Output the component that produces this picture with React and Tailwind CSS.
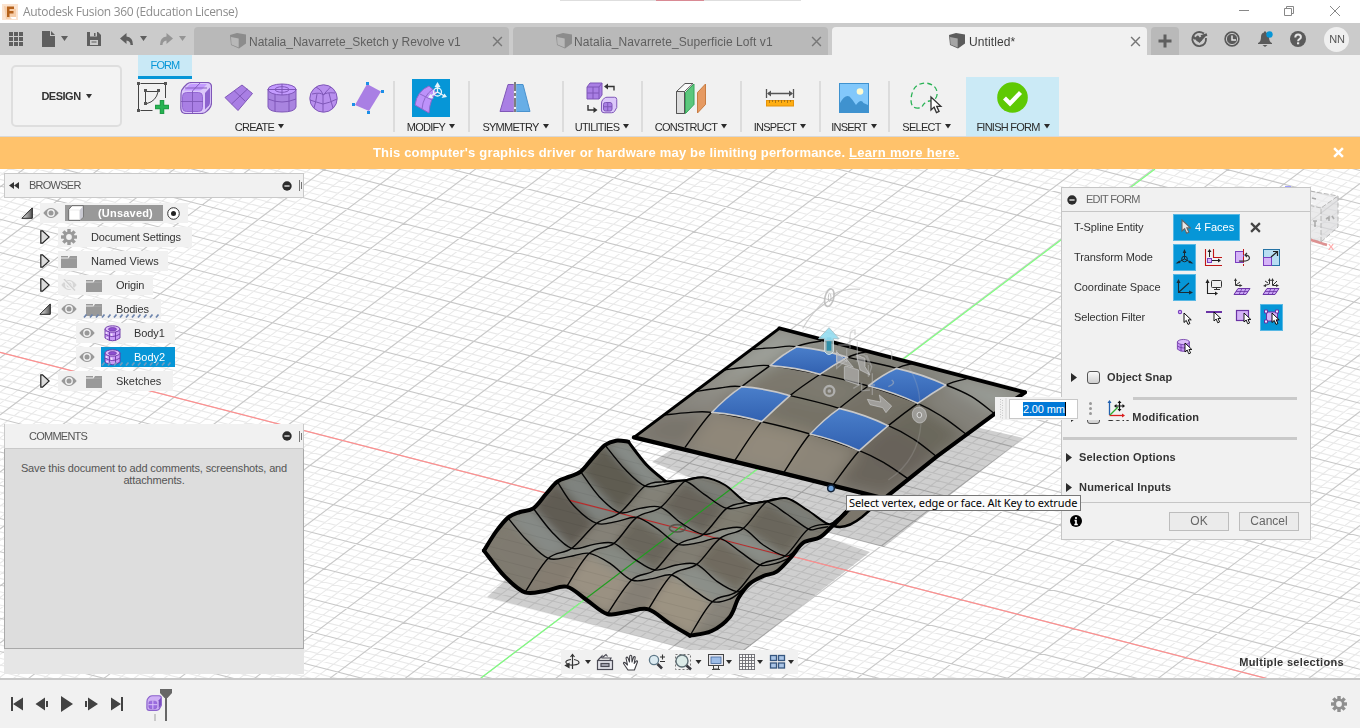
import React from "react";

const PURPLE = "#a97fe4";
const PLINE = "#7f57b8";

/* ---------- helpers ---------- */
function smooth(pts) {
  let d = `M${pts[0][0]} ${pts[0][1]}`;
  for (let i = 0; i < pts.length - 1; i++) {
    const p0 = pts[i - 1] || pts[i];
    const p1 = pts[i];
    const p2 = pts[i + 1];
    const p3 = pts[i + 2] || p2;
    const k = 6;
    d += `C${p1[0] + (p2[0] - p0[0]) / k} ${p1[1] + (p2[1] - p0[1]) / k} ${p2[0] - (p3[0] - p1[0]) / k} ${p2[1] - (p3[1] - p1[1]) / k} ${p2[0]} ${p2[1]}`;
  }
  return d;
}
const poly = (pts) => pts.map((p) => p.join(",")).join(" ");

function Caret({ className = "" }) {
  return (
    <svg className={`shrink-0 ${className}`} width="6" height="5" viewBox="0 0 6 5">
      <path d="M0 0h6L3 4.400z" fill="currentColor" />
    </svg>
  );
}

/* ---------- model geometry ---------- */
const W = [
  [[42, 362], [165, 487], [290, 470], [412, 552], [535, 538], [660, 617], [780, 560]],
  [[115, 265], [235, 385], [358, 370], [485, 450], [605, 435], [727, 515], [818, 480]],
  [[190, 235], [305, 355], [432, 340], [555, 420], [680, 403], [800, 485], [840, 462]],
  [[262, 155], [380, 280], [500, 262], [625, 343], [750, 325], [870, 405], [958, 384]],
  [[332, 125], [450, 248], [572, 232], [700, 313], [820, 295], [945, 378], [1000, 338]],
  [[405, 45], [525, 168], [645, 153], [770, 235], [890, 215], [1015, 297], [1075, 290]],
  [[475, 35], [580, 155], [700, 142], [830, 217], [950, 205], [1075, 282], [1130, 250]],
];
const W_MID = [
  [[100, 432], [228, 476], [350, 515], [474, 543], [598, 584], [730, 603]],
  [[170, 330], [298, 380], [420, 400], [548, 446], [665, 475], [780, 507]],
  [[245, 305], [372, 343], [495, 388], [620, 405], [742, 455], [822, 475]],
  [[312, 228], [442, 274], [560, 295], [690, 337], [810, 365], [918, 400]],
  [[388, 200], [510, 235], [635, 280], [762, 297], [880, 345], [975, 362]],
  [[465, 118], [585, 163], [703, 193], [832, 227], [950, 252], [1045, 295]],
  [[530, 108], [650, 150], [765, 165], [890, 214], [1012, 240], [1105, 265]],
];
const rowPts = (r) => W[r].flatMap((p, i) => (W_MID[r][i] ? [p, W_MID[r][i]] : [p]));
const W_LEFT = [[42, 362], [78, 305], [115, 262], [150, 246], [190, 235], [228, 192], [262, 155], [298, 140], [332, 125], [370, 82], [405, 45], [438, 32], [475, 35]];
const W_RIGHT = [[660, 617], [725, 603], [780, 560], [805, 505], [838, 462], [880, 438], [920, 425], [962, 383], [1000, 338], [1050, 322], [1090, 285], [1130, 245]];
const W_BACK = [[475, 35], [530, 105], [588, 155]];
const W_FRONT = [[42, 362], [105, 440], [165, 487], [228, 482], [290, 470], [350, 510], [412, 552], [474, 545], [535, 538], [598, 580], [660, 617]];
const CROSS = [1, 2, 3, 4, 5].map((c) => W.map((r) => r[c]));
const W_TONES = [
  ["#7f7a6f", "#857d71", "#9a9182", "#857f74", "#9c9382", "#88847a"],
  ["#868a86", "#7c7a72", "#868a83", "#807e75", "#8b8f89", "#898c88"],
  ["#605c52", "#858177", "#6a665b", "#817d72", "#6f6a5f", "#817e75"],
  ["#7f837f", "#7a7870", "#848881", "#807e75", "#898d87", "#85837c"],
  ["#5f5b51", "#838177", "#68645a", "#7f7b70", "#6b665b", "#7e7b72"],
  ["#868b87", "#8a8c86", "#7b7e78", "#898b85", "#7b7e78", "#6b675d"],
];

const P = [
  [[478, 145], [604, 183], [740, 215], [880, 250], [1040, 296], [1215, 337]],
  [[395, 208], [530, 200], [683, 232], [830, 265], [978, 315], [1122, 400]],
  [[310, 270], [450, 257], [600, 283], [745, 318], [893, 370], [1040, 464]],
  [[225, 335], [365, 320], [510, 347], [658, 385], [805, 437], [950, 530]],
  [[133, 405], [275, 397], [425, 425], [570, 462], [718, 512], [865, 597]],
  [[42, 472], [195, 502], [342, 545], [490, 580], [640, 614], [800, 650]],
];
const P_MID = [
  null,
  [[465, 203], null, null, null, [1055, 350]],
  [[385, 261], null, null, null, [970, 412]],
  [[300, 324], null, null, null, [882, 478]],
  [[205, 398], null, null, null, [795, 550]],
  null,
];
const pillowRow = (r) => P[r].flatMap((p, i) => (P_MID[r] && P_MID[r][i] ? [p, P_MID[r][i]] : [p]));
const P_TONES = [
  ["#9b9e98", "#969993", "#8a8b84", "#8b8d87", "#989b95"],
  ["#9fa29b", "#807e74", "#726f65", "#787469", "#84827a"],
  ["#97978f", "#7c786d", "#7d7a70", "#757166", "#6b675c"],
  ["#8b8982", "#7a756a", "#767266", "#736e63", "#67625a"],
  ["#78736a", "#8f8779", "#928a7c", "#8c8578", "#6a655b"],
];
const P_OUT = "M478 145L1215 337L1122 405Q1040 464 950 530L800 652L720 638L490 580L42 472Z";
const BLUE = [[1, 1], [1, 3], [3, 1], [3, 3]];

function Grid() {
  const minor = [];
  const major = [];
  for (let i = -125; i < 130; i++) {
    const y = 352.3 + i * 6.65;
    (i % 5 === 0 ? major : minor).push(`M0 ${y.toFixed(2)}L1360 ${(y + 1360 * 0.2575).toFixed(2)}`);
  }
  for (let i = -80; i < 85; i++) {
    const y = 527.3 + i * 11.4;
    (i % 5 === 0 ? major : minor).push(`M0 ${(y + 680 * 0.757).toFixed(2)}L1360 ${(y - 680 * 0.757).toFixed(2)}`);
  }
  return (
    <g fill="none">
      <path d={minor.join("")} stroke="#e9e9e9" strokeWidth="1.100" />
      <path d={major.join("")} stroke="#c8c8c8" strokeWidth="1.100" />
    </g>
  );
}

function Scene() {
  const wOutline =
    smooth(W_LEFT) +
    smooth(W_BACK).replace("M", "L") +
    smooth(rowPts(6).slice(2)).replace("M", "L") +
    smooth([...W_RIGHT].reverse()).replace("M", "L") +
    smooth([...W_FRONT].reverse()).replace("M", "L") + "Z";
  return (
    <svg className="absolute inset-0" width="1360" height="509" viewBox="0 169 1360 509">
      <defs>
        <filter id="soft" x="-10%" y="-10%" width="120%" height="120%"><feGaussianBlur stdDeviation="12" /></filter>
        <filter id="softer" x="-10%" y="-10%" width="120%" height="120%"><feGaussianBlur stdDeviation="24" /></filter>
        <clipPath id="wc"><path d={wOutline} /></clipPath>
        <clipPath id="pc"><path d={P_OUT} /></clipPath>
        <linearGradient id="faceBlue" x1="0" y1="0" x2="0" y2="1">
          <stop offset="0" stopColor="#4a7fcb" /><stop offset="1" stopColor="#3261b0" />
        </linearGradient>
      </defs>
      <rect x="0" y="169" width="1360" height="509" fill="#fff" />
      <path d="M652 462L690 438L980 428L1023 438L884 547L820 530Z M487 597L560 530L828 538L870 552L745 650L690 650Z" fill="#cfcfcf" />
      <g style={{ mixBlendMode: "multiply" }}><Grid /></g>
      <path d="M0 352.3L1360 702.5" stroke="#ff8f8f" strokeWidth="1.200" />
      <path d="M1155 169L481 678" stroke="#7dff7d" strokeWidth="1.200" />

      {/* pillow underside */}
      <path d="M845 512L885 497L862 517Q846 530 834 526Z" fill="#7b766b" stroke="#000" strokeWidth="2.400" />

      {/* wave body */}
      <g transform="translate(470 430) scale(0.33333)">
        <path d={wOutline} fill="#7c786d" />
        <g clipPath="url(#wc)">
          <g filter="url(#soft)">
            {W_TONES.map((row, r) =>
              row.map((c, k) => (
                <polygon key={`${r}-${k}`} points={poly([W[r][k], W[r][k + 1], W[r + 1][k + 1], W[r + 1][k]])} fill={c} stroke={c} strokeWidth="3" />
              ))
            )}
          </g>
          {[1, 3, 5].map((r) =>
            [1, 3].map((k) => (
              <polygon key={`c${r}-${k}`} points={poly([W[r][k], W_MID[r][k], W[r][k + 1], W[r + 1][k + 1], W_MID[r + 1][k], W[r + 1][k]])} fill="#9ca09a" fillOpacity=".5" />
            ))
          )}
          <g stroke="#000" strokeOpacity=".06" strokeWidth="3">
            {Array.from({ length: 30 }, (_, i) => (
              <path key={i} d={`M0 ${-260 + i * 33}L1200 ${49 + i * 33}`} />
            ))}
          </g>
          <path d="M300 211L965 383" stroke="#b92b2b" strokeWidth="3.500" />
          <path d="M855 122L345 508" stroke="#1f9e1f" strokeWidth="3.500" />
          <ellipse cx="622" cy="295" rx="24" ry="11" fill="none" stroke="#58554d" strokeWidth="5" />
        </g>
        <g fill="none" stroke="#050505" strokeWidth="4.200">
          {[1, 2, 3, 4, 5].map((r) => <path key={r} d={smooth(rowPts(r))} />)}
          {CROSS.map((c, i) => <path key={i} d={smooth(c)} />)}
        </g>
        <path d={smooth(rowPts(6).slice(2))} fill="none" stroke="#000" strokeWidth="6" />
        <path d={smooth(W_BACK)} fill="none" stroke="#000" strokeWidth="9" />
        <g fill="none" stroke="#000" strokeWidth="12" strokeLinecap="round">
          <path d={smooth(W_LEFT)} />
          <path d={smooth(W_FRONT)} />
          <path d={smooth(W_RIGHT)} />
        </g>
      </g>

      {/* pillow body */}
      <g transform="translate(620 280) scale(0.33333)">
        <path d={P_OUT} fill="#7d796e" />
        <g clipPath="url(#pc)">
          <g filter="url(#softer)">
            <path d={P_OUT} fill="#7d796e" stroke="#85827a" strokeWidth="60" />
            {P_TONES.map((row, r) =>
              row.map((c, k) => (
                <polygon key={`${r}-${k}`} points={poly([P[r][k], P[r][k + 1], P[r + 1][k + 1], P[r + 1][k]])} fill={c} stroke={c} strokeWidth="3" />
              ))
            )}
          </g>
        </g>
        <g fill="none" stroke="#050505" strokeWidth="4.200">
          {[1, 2, 3, 4].map((r) => <path key={"r" + r} d={smooth(pillowRow(r))} />)}
          {[1, 2, 3, 4].map((c) => <path key={"c" + c} d={smooth(P.map((r) => r[c]))} />)}
        </g>
        {BLUE.map(([r, c]) => (
          <path
            key={`${r}${c}`}
            d={`M${P[r][c].join(" ")}Q${(P[r][c][0] + P[r][c + 1][0]) / 2 + 2} ${(P[r][c][1] + P[r][c + 1][1]) / 2 - 8} ${P[r][c + 1].join(" ")}Q${(P[r][c + 1][0] + P[r + 1][c + 1][0]) / 2 + 1} ${(P[r][c + 1][1] + P[r + 1][c + 1][1]) / 2 - 3} ${P[r + 1][c + 1].join(" ")}Q${(P[r + 1][c][0] + P[r + 1][c + 1][0]) / 2 + 2} ${(P[r + 1][c][1] + P[r + 1][c + 1][1]) / 2 - 8} ${P[r + 1][c].join(" ")}Q${(P[r][c][0] + P[r + 1][c][0]) / 2 - 2} ${(P[r][c][1] + P[r + 1][c][1]) / 2 - 6} ${P[r][c].join(" ")}Z`}
            fill="url(#faceBlue)" stroke="#c8c8c8" strokeWidth="5" strokeLinejoin="round"
          />
        ))}
        <g fill="none" stroke="#000" strokeLinejoin="round" strokeLinecap="round">
          <path d="M478 145L42 472" strokeWidth="9" />
          <path d="M478 145L1215 337" strokeWidth="11" />
          <path d="M1215 337L1122 403Q1040 464 950 530L800 650" strokeWidth="12" />
          <path d="M42 472L490 580L720 637L790 655" strokeWidth="13" />
        </g>
        <circle cx="633" cy="625" r="10" fill="#6fa3dc" stroke="#132338" strokeWidth="4.500" />

        {/* manipulator */}
        <g fill="none" stroke="#b9b9b9" strokeOpacity=".85">
          <path d="M548 145Q575 100 612 65M642 42Q670 25 720 28" stroke="#c8c8c8" strokeWidth="3.500" />
          <ellipse cx="628" cy="53" rx="13" ry="27" transform="rotate(14 628 53)" strokeWidth="5" />
          <ellipse cx="629" cy="53" rx="4" ry="12" strokeWidth="3" />
          <circle cx="628" cy="333" r="15" strokeWidth="7" />
          <circle cx="628" cy="333" r="3" strokeWidth="5" />
          <path d="M868 262Q905 330 898 385M903 430Q895 540 805 600" strokeOpacity=".22" strokeWidth="4" />
          <path d="M650 210V265L680 240V205M690 205V170Q690 150 705 150V165M655 195H690M712 185V245M740 225L755 260L745 290V255M715 225Q740 215 745 250M745 315H765M757 280V345M780 215Q800 200 815 215V240M815 300Q830 310 805 320M700 325L725 310V332L750 330" strokeOpacity=".5" strokeWidth="4" />
        </g>
        <g fill="#bcbcbc" fillOpacity=".6" stroke="#cfcfcf" strokeOpacity=".6" strokeWidth="3">
          <path d="M673 262Q673 258 678 258L716 270V315L678 302Q673 300 673 295Z" />
          <path d="M650 215L680 245V238L700 262L650 245Z" />
          <path d="M710 225L735 235V260L750 285L720 270Z" />
          <path d="M742 358L782 366L778 345L815 378L798 398L788 383L750 374Z" />
          <ellipse cx="898" cy="405" rx="21" ry="24" transform="rotate(-20 898 405)" />
        </g>
        <ellipse cx="898" cy="405" rx="7" ry="8" fill="#8f8d88" stroke="#dadada" strokeWidth="3" />
        <path d="M614 176V215Q627 232 640 215V176Z" fill="#9fb9bd" fillOpacity=".8" stroke="#d5e4e7" strokeWidth="3" />
        <path d="M620 172V212H634V172Z" fill="#2f8fa8" />
        <path d="M627 143L657 176H640V182H614V176H596Z" fill="#92dcf0" fillOpacity=".9" stroke="#a9c5cc" strokeWidth="3" strokeLinejoin="round" />
      </g>

      {/* view cube */}
      <g opacity=".85">
        <path d="M1285 187h6" stroke="#8f8fff" strokeWidth="2" />
        <path d="M1306 200L1310 191L1338 196L1321 208Z" fill="#ececee" fillOpacity=".8" />
        <path d="M1306 202L1321 208V242L1306 238Z" fill="#e2e2e4" fillOpacity=".8" />
        <path d="M1321 208L1338 196V227L1321 242Z" fill="#d8d8db" fillOpacity=".8" />
        <path d="M1310 191L1338 196V227L1321 242L1308 238M1321 242V208L1338 196M1321 208L1308 205" fill="none" stroke="#ababab" strokeDasharray="5 2" />
        <path d="M1326 219l3-2v4M1332 216l2 3M1312 198l4 1M1313 221h4M1315 221v6" stroke="#9f9f9f" strokeWidth="1.600" fill="none" />
        <path d="M1308 239L1327 245" stroke="#d98080" strokeWidth="2.500" />
        <text x="1328" y="249.500" fontSize="9" fontWeight="bold" fill="#ff9c9c" fontFamily="Liberation Sans, sans-serif">X</text>
      </g>
    </svg>
  );
}

/* ---------- small icons ---------- */
const Eye = ({ off }) => (
  <svg className="shrink-0" width="16" height="12" viewBox="0 0 16 12">
    <g opacity={off ? 0.3 : 1}>
      <path d="M.3 6Q8-4 15.700 6Q8 16 .3 6Z" fill="#999" />
      <circle cx="8" cy="6" r="3.900" fill="#f1f1f1" />
      <circle cx="8" cy="6" r="2.500" fill="#999" />
      {off && <path d="M2 0L14 12" stroke="#f1f1f1" strokeWidth="3" />}
      {off && <path d="M3 0L14 11.500" stroke="#888" strokeWidth="1.300" />}
    </g>
  </svg>
);
const Folder = () => (
  <svg className="shrink-0" width="16" height="13" viewBox="0 0 16 13">
    <path d="M0 1h7v1.500h-7zM0 3.500h7.500L9 1h7v12H0z" fill="#999" />
    <path d="M7.500 3.200h8" stroke="#b5b5b5" strokeWidth=".6" />
  </svg>
);
const Gear = ({ size = 16, color = "#999", hole = "#f1f1f1" }) => (
  <svg className="shrink-0" width={size} height={size} viewBox="0 0 16 16">
    <g fill={color}>
      {[0, 45, 90, 135].map((a) => <rect key={a} x="6.300" y="0" width="3.400" height="16" transform={`rotate(${a} 8 8)`} />)}
      <circle cx="8" cy="8" r="5.600" />
    </g>
    <circle cx="8" cy="8" r="2.900" fill={hole} />
  </svg>
);
const Cyl = () => (
  <svg className="shrink-0" width="17" height="17" viewBox="0 0 17 17">
    <path d="M1 4V13Q8.500 18.500 16 13V4Z" fill="#c99bf5" stroke="#6a33a5" strokeWidth=".9" />
    <ellipse cx="8.500" cy="4" rx="7.500" ry="3.200" fill="#ddbcfa" stroke="#6a33a5" strokeWidth=".9" />
    <ellipse cx="8.500" cy="4.200" rx="4" ry="1.700" fill="#8d4fd0" stroke="#6a33a5" strokeWidth=".7" />
    <path d="M1 9Q8.500 14 16 9M5.500 7v8.500M11.500 7v8.500" fill="none" stroke="#6a33a5" strokeWidth=".9" />
    <path d="M2.500 7v2M7.500 8.500v2.500M3 12v1.500" stroke="#fff" strokeWidth="1.800" opacity=".7" />
  </svg>
);
const RightTri = () => (
  <svg className="shrink-0" width="10" height="14" viewBox="0 0 10 14">
    <path d="M.8.8h1.700L9.200 7L2.500 13.200H.8z" fill="#dcdcdc" stroke="#222" strokeWidth="1.200" />
  </svg>
);
const DownTri = () => (
  <svg className="shrink-0" width="12" height="12" viewBox="0 0 12 12">
    <defs><linearGradient id="dt"><stop offset="0" stopColor="#f0f0f0" /><stop offset="1" stopColor="#555" /></linearGradient></defs>
    <path d="M11.300.9V11.300H.9z" fill="url(#dt)" stroke="#222" />
  </svg>
);
const Minus = ({ className = "" }) => (
  <svg className={`shrink-0 ${className}`} width="10" height="10" viewBox="0 0 10 10">
    <circle cx="5" cy="5" r="4.700" fill="#2b2b2b" /><path d="M2.400 5h5.200" stroke="#fff" strokeWidth="1.200" />
  </svg>
);
const Pointer = ({ x, y, fill = "#fff", stroke = "#000", s = 1 }) => (
  <path transform={`translate(${x} ${y}) scale(${s})`} d="M0 0V10L2.400 7.800L4.200 12L6.200 11.100L4.400 7.200H7.600Z" fill={fill} stroke={stroke} />
);
const TabCube = ({ dark }) => (
  <svg className="shrink-0" width="17" height="16" viewBox="0 0 17 16">
    <path d="M0 2L7 0L16 1.500V10.500L9 15.500L1 12Z" fill={dark ? "#5c5c5c" : "#8c8c8c"} />
    <path d="M1 4L8.700 5.500V14.500L1.500 11.500Z" fill={dark ? "#a5a5a5" : "#b8b8b8"} />
  </svg>
);
const X = ({ size = 10, w = 1.5, color = "#777" }) => (
  <svg className="shrink-0" width={size} height={size} viewBox="0 0 10 10">
    <path d="M1 1L9 9M9 1L1 9" stroke={color} strokeWidth={w} />
  </svg>
);
const BoxGlyph = ({ size = 32 }) => (
  <svg width={size} height={size} viewBox="0 0 32 32">
    <path d="M1 12Q1 8 4 5L7 2Q9 .5 12 .5H27Q31.500.5 31.500 5V21Q31.500 24 29 27L27 29Q25 31.500 21 31.500H6Q.8 31.500.8 26Z" fill="#dcc8fa" stroke={PLINE} strokeWidth="1.200" />
    <path d="M4 8.500L9 3Q10 2 12 2H27L22 7.500Q21 8.500 19 8.500Z" fill="#c39bff" />
    <path d="M25 11L30 5.500V20Q30 22 29 23.500L25 27.500Z" fill="#8e64cf" />
    <rect x="2.500" y="10.500" width="20" height="19" rx="4" fill={PURPLE} stroke="#9468d4" />
    <path d="M12.500 9V31M1 19.500H23M12.500 9L20 1M5 6H27" fill="none" stroke={PLINE} strokeWidth=".9" />
  </svg>
);

/* ---------- title & tabs ---------- */
function TitleBar() {
  return (
    <div className="relative flex h-[23px] shrink-0 items-center bg-white">
      <svg className="ml-[2px]" width="16" height="16" viewBox="0 0 16 16">
        <rect width="16" height="16" fill="#fbe3cf" /><path d="M2 2l12 3v9L4 15z" fill="#f6cda8" />
        <path d="M5 2.500h7v2.500H7.500v2h4v2.400h-4V13H5z" fill="#b5611a" /><path d="M8 13h6v2H10z" fill="#fff" />
      </svg>
      <span className="ml-[5px] font-['Open_Sans','Noto_Sans',sans-serif] text-[12px] tracking-[-0.310px] text-[#8d8d8d] whitespace-nowrap">Autodesk Fusion 360 (Education License)</span>
      <svg className="ml-auto mr-[19px] mb-[2px]" width="103" height="14" viewBox="0 0 103 14">
        <g fill="none" stroke="#888">
          <path d="M1 6.500h10M92 2l10 10M102 2l-10 10" />
          <path d="M46.500 4.500h7v7h-7zM48.500 4.500v-2h7v7h-2" />
        </g>
      </svg>
      <div className="absolute left-[560px] top-0 flex h-px w-[241px] bg-[#dedede]"><div className="ml-24 w-12 bg-[#d98a94]" /></div>
    </div>
  );
}

function TabBar() {
  return (
    <div className="flex h-8 shrink-0 items-stretch bg-[#cbcbcb] text-[#5f5f5f]">
      <div className="flex w-[194px] items-center pl-[9px]">
        <svg width="180" height="20" viewBox="9 29 180 20">
          <g fill="#5f5f5f">
            {[0, 1, 2].map((r) => [0, 1, 2].map((c) => <rect key={`${r}${c}`} x={9 + c * 5} y={32 + r * 5} width="4" height="4" />))}
            <path d="M42 31h8v5h5v11H42zM51 31l4 4h-4z" />
            <path d="M61 36h7l-3.500 5zM140 36h7l-3.500 5z" />
            <path d="M87 32h11l3 3v11H87z" />
            <path d="M120 38.500l6.500-5.500v3.500q6.500.5 6.500 8.500h-2.500q0-4-4-4.500v3.500z" />
          </g>
          <path d="M90 32h7v4.500h-7zM90 40h8v5h-8z" fill="#cbcbcb" /><path d="M94 33h1.500v3H94zM91.500 41.500h5v1h-5z" fill="#5f5f5f" />
          <g fill="#959595"><path d="M173 38.500l-6.500-5.500v3.500q-6.500.5-6.500 8.500h2.500q0-4 4-4.500v3.500z" /><path d="M179 36h7l-3.500 5z" /></g>
        </svg>
      </div>
      <Tab className="w-[315px] bg-[#b9b9b9]" pad="pl-[36px]" gap="ml-[2px]" text="Natalia_Navarrete_Sketch y Revolve v1" tracking="tracking-[-0.010px]" />
      <Tab className="ml-1 w-[315px] bg-[#b9b9b9]" pad="pl-[43px]" gap="ml-[1px]" text="Natalia_Navarrete_Superficie Loft v1" tracking="tracking-[0.070px]" />
      <Tab className="ml-1 w-[315px] bg-[#f1f1f1] text-[#3c3c3c]" pad="pl-[117px]" text="Untitled*" tracking="tracking-[0.100px]" dark gap="ml-[3px]" />
      <div className="mt-1 ml-1 flex w-7 items-center justify-center rounded-t bg-[#b9b9b9]">
        <svg width="14" height="14" viewBox="0 0 14 14"><path d="M7 .5v13M.5 7h13" stroke="#5f5f5f" strokeWidth="3" /></svg>
      </div>
      <svg className="ml-[10px]" width="120" height="32" viewBox="1189 23 120 32">
        <g fill="none" stroke="#5a5a5a">
          <path d="M1204 33.500Q1199 30.500 1195 33.500Q1191 37.500 1193 42Q1195.500 46.500 1200 46Q1206.500 45 1206 38" strokeWidth="1.800" />
          <path d="M1192.500 36.500l3.500 2.500M1198.500 42l6-6.500" strokeWidth="2.600" />
          <circle cx="1199" cy="38.500" r="3.200" fill="#5a5a5a" stroke="none" />
          <path d="M1201 36.500l6-2" strokeWidth="2.400" />
          <path d="M1198 33.500l2.500 3.500" stroke="#cbcbcb" strokeWidth="2" />
          <circle cx="1232" cy="39" r="6.700" fill="#5a5a5a" stroke="#5a5a5a" strokeWidth="2" />
          <circle cx="1232" cy="39" r="5.600" stroke="#cbcbcb" />
          <path d="M1232 35.500V40h4" stroke="#e6e6e6" strokeWidth="1.500" />
        </g>
        <path d="M1258 43q3-1 3-6q0-4 3-4.500v-1h2v1q3 .5 3 4.500q0 5 3 6v1h-14zM1262.500 45h5l-2.500 2z" fill="#5a5a5a" />
        <circle cx="1269.500" cy="34.500" r="3.200" fill="#0696d7" />
        <circle cx="1298" cy="39" r="8" fill="#5a5a5a" />
        <path d="M1295.300 37.500q0-3 2.800-3t2.800 2.500q0 1.400-1.400 2.200t-1.400 2" fill="none" stroke="#e6e6e6" strokeWidth="2" /><rect x="1297" y="42.300" width="2.200" height="2" fill="#e6e6e6" />
      </svg>
      <div className="mt-1 ml-[15px] flex h-[25px] w-[25px] items-center justify-center rounded-full bg-[#efefef] pl-px text-[11px] tracking-[-0.100px] text-[#555]">NN</div>
    </div>
  );
}
function Tab({ className, pad, text, tracking, dark, gap }) {
  return (
    <div className={`mt-1 flex items-center rounded-t pr-[6px] ${pad} ${className}`}>
      <TabCube dark={dark} />
      <span className={`${gap} pt-[1px] text-[12px] whitespace-nowrap ${tracking}`}>{text}</span>
      <span className="ml-auto"><X size={11} w={1.3} /></span>
    </div>
  );
}

/* ---------- ribbon ---------- */
function Label({ children }) {
  return (
    <div className="flex items-center text-[11px] leading-[13px] whitespace-nowrap text-[#2b2b2b]">
      <span className="ml-px tracking-[-0.750px]">{children}</span><Caret className="mb-[2px] ml-[4px]" />
    </div>
  );
}
function Group({ className, label, children }) {
  return (
    <div className={`flex shrink-0 flex-col items-center ${className}`}>
      <div className="mt-[24px] mb-[4px] flex h-[38px] items-center">{children}</div>
      <Label>{label}</Label>
    </div>
  );
}
const Sep = () => <div className="mt-[26px] -mr-[2px] h-[51px] w-[2px] shrink-0 bg-[#dcdcdc]" />;

function Ribbon() {
  return (
    <div className="relative flex h-[82px] shrink-0 border-b border-[#d8d8d8] bg-[#f1f1f1]">
      <div className="mt-[10px] ml-[11px] flex h-[62px] w-[111px] items-center justify-center gap-[5px] rounded-[5px] border-2 border-[#dedede] bg-[#f3f3f3] text-[11px] font-bold tracking-[-0.500px] text-[#333]">
        <span>DESIGN</span><Caret />
      </div>
      <div className="absolute left-[138px] top-0 flex h-[24px] w-[54px] items-center justify-center border-b-[3px] border-[#0696d7] bg-[#c9e9f6] text-[11px] tracking-[-0.900px] text-[#0696d7]">FORM</div>
      <Group className="ml-[3px] w-[268px]" label="CREATE">
        <div className="flex items-center pl-[3px]">
          <div className="flex w-[43px] justify-center">
            <svg width="33" height="34" viewBox="137 81 33 34">
              <g fill="none" stroke="#444"><path d="M140.500 83.500h24M138.500 85v24M165.500 85v13M140.500 110.500h12M146.500 91.500h12M145.500 92v11M158 92q-2 9-11 11.500" /></g>
              <g fill="#555"><path d="M137 82h3v3h-3zM164 82h3v3h-3zM137 109h3v3h-3zM144 89h3v3h-3zM157 89h3v3h-3zM144 102h3v3h-3z" /></g>
              <path d="M162 100v14M155 107h14" stroke="#1f9b45" strokeWidth="4.500" /><path d="M162 101v12M156 107h12" stroke="#27b352" strokeWidth="2.500" />
            </svg>
          </div>
          <div className="flex w-[43px] justify-center"><BoxGlyph /></div>
          <div className="flex w-[43px] justify-center">
            <svg width="30" height="28" viewBox="0 0 30 28"><path d="M18 1L28.500 9.500L14 26.500L1 13.500Z" fill={PURPLE} stroke={PLINE} /><path d="M10 6.500L21.500 17.500M23.500 5L7.500 20" stroke={PLINE} /></svg>
          </div>
          <div className="flex w-[43px] justify-center">
            <svg width="30" height="30" viewBox="0 0 30 30">
              <path d="M1 6V24Q2 29 15 29T29 24V6Z" fill="#a984e0" stroke={PLINE} /><ellipse cx="15" cy="6.500" rx="14" ry="5.500" fill="#c49bff" stroke={PLINE} />
              <ellipse cx="15" cy="6.500" rx="7" ry="2.800" fill="none" stroke={PLINE} />
              <path d="M1 16Q15 22 29 16M8 11v17M22 11v17M15 1v11M1 6.500h28" fill="none" stroke={PLINE} />
            </svg>
          </div>
          <div className="flex w-[43px] justify-center pr-[3px]">
            <svg width="29" height="29" viewBox="0 0 29 29">
              <circle cx="14.500" cy="14.500" r="13.700" fill="#b88fee" stroke={PLINE} />
              <path d="M3 10Q12 8 14 11Q17 8 26 9M14 11V20M14 20Q7 18 1 16M14 20Q20 19 28 15M7 3Q12 5 14.500 11Q20 4 22 3M14 20V28M5 24Q7 18 8 10M24 24Q22 18 20 9" fill="none" stroke={PLINE} />
            </svg>
          </div>
          <div className="flex w-[43px] justify-center">
            <svg width="32" height="32" viewBox="0 0 32 32"><path d="M15 2L29 9.500L17 29L3 23Z" fill={PURPLE} /><g fill="#1b8fe8"><path d="M14 0h3v3h-3zM29 8h3v3h-3zM0 21h3v3h-3zM15 29h3v3h-3z" /></g></svg>
          </div>
        </div>
      </Group>
      <Sep />
      <Group className="w-[75px]" label="MODIFY">
        <svg className="ml-px" width="38" height="38" viewBox="0 0 38 38"><rect width="38" height="38" fill="#0696d7" />
          <path d="M3 26Q5 12 17 7L25 14Q18 19 17 34Z" fill="#bd92fa" stroke="#8e68cb" /><path d="M8 15L20 21M10 30Q11 17 21 10" fill="none" stroke="#8e68cb" />
          <g fill="none" stroke="#e6f3fa" strokeWidth="1.300"><circle cx="25.500" cy="13" r="4" /><path d="M25.500 6v7l7 4M25.500 13l-7 4" /></g>
          <path d="M25.500 3l3 5h-6zM35 18l-5.500 1l3-4.500zM16 18.500l5.500 1l-3-4.500z" fill="#e6f3fa" />
        </svg>
      </Group>
      <Sep />
      <Group className="w-[94px]" label="SYMMETRY">
        <svg width="32" height="34" viewBox="0 0 32 34"><path d="M9 3.500H15V30.500H1z" fill={PURPLE} stroke="#8058b8" /><path d="M17 3.500H24L31 30.500H17z" fill="#67aee6" stroke="#4a92ce" /><path d="M16 1V33" stroke="#f1f1f1" strokeWidth="2.500" /><path d="M16 1V33" stroke="#333" strokeWidth="1.200" strokeDasharray="9 2 3 2" /></svg>
      </Group>
      <Sep />
      <Group className="w-[79px]" label="UTILITIES">
        <svg width="32" height="32" viewBox="0 0 32 32">
          <path d="M1 5L4 1H16V13L13 17H1Z" fill="#a97fe4" stroke={PLINE} /><path d="M1 5H13V17M13 5L16 1" fill="none" stroke={PLINE} /><path d="M7 5v12M1 11h12" stroke={PLINE} />
          <g transform="translate(15 15) scale(.5)"><path d="M1 12Q1 8 4 5L7 2Q9 .5 12 .5H27Q31.500.5 31.500 5V21L27 29Q25 31.500 21 31.500H6Q.8 31.500.8 26Z" fill="#dcc8fa" stroke={PLINE} strokeWidth="2" /><rect x="5" y="11" width="17" height="17" rx="4" fill={PURPLE} stroke={PLINE} strokeWidth="2" /><path d="M13.500 11v17M5 19.500h17" stroke={PLINE} strokeWidth="2" /></g>
          <path d="M28 8.500V4.500H20M2 23v5h6" fill="none" stroke="#333" strokeWidth="1.400" /><path d="M18 4.500l4-3v6zM11.500 28l-4-3v6z" fill="#333" />
        </svg>
      </Group>
      <Sep />
      <Group className="w-[99px]" label="CONSTRUCT">
        <svg width="32" height="33" viewBox="0 0 32 33"><path d="M1.500 9.500L10 1.500H18L9.500 9.500V31.500H1.500Z" fill="#fafafa" stroke="#555" /><path d="M1.500 9.500h8v22h-8z" fill="#ddd" stroke="#555" /><path d="M10.500 10.500L19 2V22.500L10.500 31.500Z" fill="#5cc77c" stroke="#37a75b" /><path d="M22.500 10.500L30.500 2V22.500L22.500 31Z" fill="#e69a62" stroke="#c87c42" /></svg>
      </Group>
      <Sep />
      <Group className="w-[79px]" label="INSPECT">
        <svg width="30" height="20" viewBox="0 0 30 20"><path d="M1.500 1v9M28.500 1v9M3 5.500h24" stroke="#555" strokeWidth="1.300" /><path d="M2 5.500l4-3v6zM28 5.500l-4-3v6z" fill="#555" /><rect x="1.500" y="12.500" width="27" height="5.500" fill="#ffae12" stroke="#e6930a" /><path d="M4.500 12v3M7.500 12v2M10.500 12v3M13.500 12v2M16.500 12v3M19.500 12v2M22.500 12v3M25.500 12v2" stroke="#9a6a14" strokeWidth=".8" /></svg>
      </Group>
      <Sep />
      <Group className="w-[69px]" label="INSERT">
        <svg width="30" height="30" viewBox="0 0 30 30"><rect x=".5" y=".5" width="29" height="29" fill="#82c8fb" stroke="#3f92cf" /><path d="M1 20Q6 11 10.500 13.500Q14 17 17 22Q22 15 24.500 20L29 22V29H1Z" fill="#3f92cf" /><circle cx="21" cy="8.500" r="3.300" fill="#fffbd0" /></svg>
      </Group>
      <Sep />
      <Group className="w-[76px]" label="SELECT">
        <svg width="34" height="34" viewBox="0 0 34 34"><path d="M10 27Q2 28 2 19Q3 2 17 2Q29 4 28 14Q27 20 20 20Q15 21 13 26Q12 27 10 27" fill="none" stroke="#28b254" strokeWidth="1.300" strokeDasharray="5 3" /><Pointer x={22} y={16} s={1.3} stroke="#333" /></svg>
      </Group>
      <div className="mt-[22px] ml-[2px] flex h-[59px] w-[93px] flex-col items-center bg-[#cbeaf6]">
        <svg className="mt-[5px] mb-[8px] shrink-0" width="31" height="31" viewBox="0 0 31 31"><circle cx="15.500" cy="15.500" r="15.300" fill="#5fc904" /><path d="M7.500 16L13 21.500L23.500 10.500" fill="none" stroke="#fff" strokeWidth="4.200" /></svg>
        <Label>FINISH FORM</Label>
      </div>
    </div>
  );
}

function Banner() {
  return (
    <div className="flex h-8 shrink-0 items-center bg-[#ffc26b] pr-[16px] pb-px pl-[373px] text-[13px] font-bold text-white">
      <span className="tracking-[0.175px] whitespace-nowrap">This computer's graphics driver or hardware may be limiting performance. <span className="tracking-[0.300px] underline">Learn more here.</span></span>
      <span className="ml-auto"><X size={11} w={2.3} color="#fff" /></span>
    </div>
  );
}

/* ---------- browser ---------- */
function PanelHead({ title, arrows, className = "", left = "ml-[4px]" }) {
  return (
    <div className={`flex items-center bg-[#f1f1f1] text-[11px] text-[#555] ${className}`}>
      <svg width="10" height="7" className={`shrink-0 ${left} ${arrows ? "" : "invisible"}`} viewBox="0 0 10 7"><path d="M5 0v7L0 3.500zM10 0v7L5 3.500z" fill="#333" /></svg>
      <span className="ml-[10px] tracking-[-0.750px]">{title}</span>
      <Minus className="mr-[6px] ml-auto" />
      <svg className="shrink-0" width="5" height="11" viewBox="0 0 5 11"><path d="M1.500 0v11M3.500 2v7" stroke="#777" /></svg>
    </div>
  );
}
const Hatch = ({ w, c = "#6d84ad" }) => (
  <svg className="absolute bottom-[1px] left-0" width={w} height="4" viewBox={`0 0 ${w} 4`}>
    {Array.from({ length: Math.floor(w / 6) }, (_, i) => <path key={i} d={`M${i * 6 + 1} 3.500L${i * 6 + 3.500} .5`} stroke={c} strokeWidth="1.700" />)}
  </svg>
);
function Browser() {
  const row = "flex h-5 items-center text-[11px] text-[#333]";
  return (
    <div className="mt-[5px] flex flex-col gap-1">
      <div className="flex items-center pl-[17px]">
        <DownTri />
        <div className="ml-[7px] flex h-[20px] w-[148px] items-center bg-[#f1f1f1] pl-[3px]">
          <Eye />
          <div className="ml-[6px] flex h-4 w-[98px] items-center bg-[#999] pl-[3px]">
            <svg width="16" height="16" viewBox="0 0 16 16"><path d="M.7 4.500L4 .7H15.300V12L12 15.300H.7Z" fill="#fff" stroke="#555" strokeWidth=".8" /><path d="M11.800 5L15 1.500V12L11.800 15Z" fill="#c9c9d2" /><path d="M1 5H11.800V15" fill="none" stroke="#ddd" strokeWidth=".6" /></svg>
            <span className="ml-[14px] text-[11px] font-bold tracking-[0.200px] text-white">(Unsaved)</span>
          </div>
          <svg className="ml-[4px]" width="13" height="13" viewBox="0 0 13 13"><circle cx="6.500" cy="6.500" r="5.800" fill="#fff" stroke="#333" /><circle cx="6.500" cy="6.500" r="2.500" fill="#222" /></svg>
        </div>
      </div>
      <div className="flex items-center pl-[36px]"><RightTri /><div className={`${row} ml-[8px] w-[134px] bg-[#f1f1f1] pl-[3px]`}><Gear /><span className="ml-[14px] tracking-[-0.180px] whitespace-nowrap">Document Settings</span></div></div>
      <div className="flex items-center pl-[36px]"><RightTri /><div className={`${row} ml-[8px] w-[110px] bg-[#f1f1f1] pl-[3px]`}><Folder /><span className="ml-[14px] whitespace-nowrap">Named Views</span></div></div>
      <div className="flex items-center pl-[36px]"><RightTri /><div className={`${row} ml-[8px] w-[95px] bg-[#f1f1f1] pl-[3px]`}><Eye off /><span className="ml-[9px] flex"><Folder /></span><span className="ml-[14px] tracking-[-0.200px]">Origin</span></div></div>
      <div className="flex items-center pl-[35px]"><DownTri /><div className={`${row} ml-[7px] w-[103px] bg-[#f1f1f1] pl-[3px]`}><Eye /><span className="relative ml-[6px] flex h-5 items-center pl-[3px]"><Folder /><span className="ml-[14px] tracking-[-0.150px]">Bodies</span><Hatch w={78} /></span></div></div>
      <div className={`${row} ml-[72px] w-[99px] bg-[#f1f1f1] pl-[3px]`}><Eye /><span className="ml-[9px] flex"><Cyl /></span><span className="ml-[13px] tracking-[-0.100px]">Body1</span></div>
      <div className={`${row} ml-[72px] w-[99px] bg-[#f1f1f1] pl-[3px]`}><Eye /><div className="relative ml-[6px] flex h-5 w-[74px] items-center bg-[#0696d7] pl-[3px] text-white"><Cyl /><span className="ml-[13px]">Body2</span><Hatch w={72} c="#6f9cc0" /></div></div>
      <div className="flex items-center pl-[36px]"><RightTri /><div className={`${row} ml-[8px] w-[115px] bg-[#f1f1f1] pl-[3px]`}><Eye /><span className="ml-[9px] flex"><Folder /></span><span className="ml-[14px]">Sketches</span></div></div>
    </div>
  );
}

/* ---------- edit form ---------- */
const Cell = ({ on, children }) => (
  <div className={`flex h-[27px] w-[23px] items-center justify-center ${on ? "bg-[#0696d7] outline outline-1 outline-[#58b8e4] -outline-offset-1" : ""}`}>
    <svg className="shrink-0" width="19" height="19" viewBox="0 0 19 19">{children}</svg>
  </div>
);
const FRow = ({ label, children }) => (
  <div className="flex h-[30px] shrink-0 items-center pl-[12px]">
    <span className="w-[99px] shrink-0 tracking-[-0.100px] whitespace-nowrap">{label}</span>
    <div className="flex items-center gap-[6px]">{children}</div>
  </div>
);
const Plane = () => <g><path d="M5 10.500H17L13 16.500H1Z" fill="#c9a4f5" stroke="#6a33a5" /><path d="M3 13.500h12M9 10.500l-3 6M13 10.500l-3 6" stroke="#6a33a5" strokeWidth=".8" /></g>;
const Arrow = () => <svg className="shrink-0" width="6" height="9" viewBox="0 0 6 9"><path d="M0 0L6 4.500L0 9z" fill="#2b2b2b" /></svg>;
const CheckBox = () => <div className="h-[13px] w-[13px] rounded-[3px] border border-[#555] bg-linear-to-b from-[#fafafa] to-[#cfcfcf]" />;

function EditForm() {
  return (
    <div className="absolute top-[18px] left-[1061px] flex h-[353px] w-[250px] flex-col border border-[#c6c6c6] bg-[#f1f1f1] text-[11px] text-[#333]">
      <div className="flex h-6 shrink-0 items-center border-b border-[#c6c6c6] pl-[5px] text-[#666]"><Minus /><span className="ml-[9px] tracking-[-0.750px] whitespace-nowrap">EDIT FORM</span></div>
      <FRow label="T-Spline Entity">
        <div className="flex h-[27px] w-[67px] items-center bg-[#0696d7] pl-[8px] text-white outline outline-1 -outline-offset-1 outline-[#58b8e4]">
          <svg width="10" height="16" viewBox="-1 -1 10 16"><Pointer x={0} y={0} s={1.1} fill="#e8e8e8" stroke="#666" /></svg><span className="ml-[4px] whitespace-nowrap">4 Faces</span>
        </div>
        <span className="ml-[4px]"><X size={11} w={2} color="#444" /></span>
      </FRow>
      <FRow label="Transform Mode">
        <Cell on><g fill="none" stroke="#1c2a33" strokeWidth="1"><path d="M9.500 3v8M9.500 11L2 15M9.500 11L17 15" /><circle cx="9.500" cy="11" r="2.800" /></g><path d="M9.500 1l1.800 4h-3.600zM.5 15.500l4-3l1 2.500zM18.500 15.500l-4-3l-1 2.500z" fill="#1c2a33" /></Cell>
        <Cell><path d="M1.500 1v16.500H18M9.500 1v8.500h8.500" fill="none" stroke="#c11717" strokeWidth="1.100" /><path d="M5.500 3v6M8 12.500h8" stroke="#222" /><path d="M5.500 1l2 3h-4zM17 12.500l-3-2v4z" fill="#222" /><rect x="3.500" y="10.500" width="4" height="4" fill="#d9bdf9" stroke="#7a3fc0" /></Cell>
        <Cell><rect x="2.500" y="3.500" width="8" height="11" fill="#d5b3f7" stroke="#7a3fc0" /><path d="M10.500 1v17" stroke="#c11717" strokeDasharray="6 1.500" /><path d="M6 13Q16 14 16.500 10Q16 7 13 7M14 5l-2 2l2 2" fill="none" stroke="#333" strokeWidth="1.200" /></Cell>
        <Cell><rect x="1.500" y="1.500" width="16" height="16" fill="#b8def2" stroke="#2573a5" /><rect x="1.500" y="9.500" width="8" height="8" fill="#d5b3f7" stroke="#7a3fc0" /><path d="M9 9L15 4M11 3.500h4.500V8" fill="none" stroke="#222" strokeWidth="1.200" /></Cell>
      </FRow>
      <FRow label="Coordinate Space">
        <Cell on><path d="M3.500 3v11.500H16M4 14L14 5" fill="none" stroke="#1c2a33" strokeWidth="1.100" /><path d="M3.500 1l2 4h-4zM18 14.500l-4-2v4z" fill="#1c2a33" /></Cell>
        <Cell><path d="M3.500 3v12.500H12" fill="none" stroke="#222" strokeWidth="1.100" /><path d="M3.500 1l2 4h-4zM14 15.500l-3-2v4z" fill="#222" /><rect x="7.500" y="2.500" width="10" height="7" rx="1" fill="#eee" stroke="#333" /><path d="M10 11.500h6M12.500 10v2" stroke="#333" /></Cell>
        <Cell><path d="M2.500 2v5.500H8M3 7L7 4" fill="none" stroke="#333" /><path d="M2.500 0l1.500 3h-3zM9.500 7.500l-3-1.500v3z" fill="#333" /><Plane /></Cell>
        <Cell><path d="M7.500 2v4L3 7.500M10.500 2v5.500H15M11 7l4-4M6 5L3 3" fill="none" stroke="#333" /><path d="M7.500 0l1.500 3H6zM10.500 0L12 3H9zM17 7.500L14 6v3zM1 8l3-2v3z" fill="#333" /><Plane /></Cell>
      </FRow>
      <FRow label="Selection Filter">
        <Cell><circle cx="5" cy="4" r="1.600" fill="#e0c8fa" stroke="#7a3fc0" strokeWidth="1.200" /><Pointer x={9} y={5} s={0.95} /></Cell>
        <Cell><path d="M2 4h16" stroke="#6a33a5" strokeWidth="2" /><Pointer x={10} y={4} s={0.9} /></Cell>
        <Cell><rect x="3.500" y="2.500" width="12" height="10" fill="#d5b3f7" stroke="#6a33a5" strokeWidth="1.200" /><Pointer x={11} y={5} s={0.9} /></Cell>
        <Cell on><rect x="4.500" y="4" width="11" height="9" fill="#d5b3f7" stroke="#6a33a5" /><g fill="#f2e6ff" stroke="#6a33a5"><path d="M2.500 2h3v3h-3zM13.500 2h3v3h-3zM2.500 12h3v3h-3z" /></g><Pointer x={10} y={5} s={0.95} /></Cell>
      </FRow>
      <FRow label="">
        <Cell><g transform="scale(.8) translate(2 1)"><path d="M1 4V13Q8.500 18.500 16 13V4Z" fill="#c492f2" stroke="#6a33a5" /><ellipse cx="8.500" cy="4" rx="7.500" ry="3.200" fill="#ddbcfa" stroke="#6a33a5" /><path d="M1 9Q8.500 14 16 9M5.500 7v8.500M11.500 7v8.500" fill="none" stroke="#6a33a5" /></g><Pointer x={10} y={5} s={0.9} /></Cell>
      </FRow>
      <div className="flex h-[35px] shrink-0 items-center pb-[4px] pl-[9px] font-bold"><Arrow /><span className="ml-[10px]"><CheckBox /></span><span className="ml-[7px] tracking-[0.100px]">Object Snap</span></div>
      <div className="ml-px mr-[13px] h-[3px] shrink-0 bg-[#c9c9c9]" />
      <div className="flex h-[37px] shrink-0 items-center pb-[3px] pl-[9px] font-bold"><Arrow /><span className="ml-[10px]"><CheckBox /></span><span className="ml-[7px] tracking-[0.180px]">Soft Modification</span></div>
      <div className="ml-px mr-[13px] h-[3px] shrink-0 bg-[#c9c9c9]" />
      <div className="mt-[2px] flex h-[30px] shrink-0 items-center pl-[4px] font-bold"><Arrow /><span className="ml-[7px] tracking-[0.200px]">Selection Options</span></div>
      <div className="flex h-[30px] shrink-0 items-center pl-[4px] font-bold"><Arrow /><span className="ml-[7px] tracking-[0.200px]">Numerical Inputs</span></div>
      <div className="mt-auto flex h-[37px] shrink-0 items-center border-t border-[#c6c6c6] pr-[11px] pl-[8px] text-[12px] text-[#666]">
        <svg width="12" height="12" viewBox="0 0 12 12"><circle cx="6" cy="6" r="6" fill="#000" /><path d="M6 2v2M4.500 5.500H6V9.500M4.300 9.500h3.500" stroke="#fff" strokeWidth="1.600" fill="none" /></svg>
        <div className="ml-auto flex gap-[10px]">
          <div className="flex h-[19px] w-[60px] items-center justify-center border border-[#bdbdbd] bg-[#ebebeb]">OK</div>
          <div className="flex h-[19px] w-[60px] items-center justify-center border border-[#bdbdbd] bg-[#ebebeb]">Cancel</div>
        </div>
      </div>
    </div>
  );
}

function ValueBox() {
  return (
    <div className="absolute top-[228px] left-[995px] flex h-[23px] w-[138px] items-center bg-[#f1f1f1]">
      <svg width="12" height="21" viewBox="0 0 12 21"><path d="M5.500 1v20M7.500 2v19" stroke="#c8c8c8" strokeDasharray="1 1.500" /><path d="M11 0v21" stroke="#d5d5d5" /></svg>
      <div className="ml-[2px] flex h-5 w-[69px] items-center border border-[#c8c8c8] bg-white pl-[13px]">
        <span className="h-[14px] border-r border-black bg-[#0078d7] text-[11px] leading-[14px] tracking-[-0.150px] whitespace-nowrap text-white">2.00 mm</span>
      </div>
      <svg width="50" height="20" viewBox="1078 398 50 20">
        <g fill="#999"><circle cx="1090.500" cy="402.500" r="1.500" /><circle cx="1090.500" cy="407.500" r="1.500" /><circle cx="1090.500" cy="412.500" r="1.500" /></g>
        <path d="M1109.500 400v14" stroke="#2060b0" strokeWidth="1.300" /><path d="M1109.500 414.500h14" stroke="#d81d1d" strokeWidth="1.300" /><path d="M1110 414l8-8" stroke="#2fae2f" strokeWidth="1.300" />
        <path d="M1125 414.500l-3-2v4z" fill="#d81d1d" /><path d="M1109.500 399l2 3h-4z" fill="#2060b0" /><path d="M1119.500 401v8M1115.500 405h8" stroke="#111" strokeWidth="1.200" /><path d="M1119.500 399.500l2 2.500h-4zM1119.500 410.500l2-2.500h-4zM1114 405l2.500-2v4zM1125 405l-2.500-2v4z" fill="#111" />
      </svg>
    </div>
  );
}

function NavBar() {
  return (
    <div className="absolute top-[481px] left-[561px] flex h-6 w-[237px] bg-[#f1f1f1]">
      <svg width="237" height="24" viewBox="561 650 237 24">
        <g fill="none" stroke="#333" strokeWidth="1.200">
          <path d="M572.500 655v14M570.500 657l2-2.500l2 2.500M571 659.500q-6 1-5 3q2 3 8 2.500q5-.5 5-2.500q0-2-5-3" /><path d="M569 663.500l-3.500 2l3.500 2z" fill="#333" />
        </g>
        <g fill="none" stroke="#4b4b55" strokeWidth="1.200"><rect x="597.500" y="660.500" width="15" height="9" fill="#e4e4ea" /><rect x="601" y="663.500" width="8" height="3" fill="#aaaab5" /><path d="M598 660l4-4v2h9l-1 2M603 657l3-2.500l1.500 2" /></g>
        <path d="M628 670l-4.500-6.500q0-2 2-.5l2 2l-1.500-7q1-1.800 2 0l1.500 4l.2-6q1-1.500 2 0l.3 6l1.600-5q1.500-1 1.600.5l-1 6l2-2.500q1.500-.5 1.200 1l-3 8z" fill="#fff" stroke="#3f3f45" strokeWidth="1.100" strokeLinejoin="round" />
        <circle cx="654" cy="660" r="4.600" fill="#dcebf2" stroke="#5d7787" strokeWidth="1.300" /><path d="M657.500 664l4.500 4.500" stroke="#3a3a40" strokeWidth="2.600" /><path d="M662.500 654.500v5M660 657h5M660 661.500h5" stroke="#333" strokeWidth="1.100" />
        <rect x="675.500" y="654.500" width="15" height="15" fill="none" stroke="#777" strokeDasharray="2 2" /><circle cx="682" cy="661" r="6" fill="#dcebe8" stroke="#5f6f75" strokeWidth="1.400" /><path d="M686.500 665.500l4.500 4" stroke="#3a3a40" strokeWidth="2.600" />
        <rect x="708.500" y="654.500" width="15" height="11" fill="#e6e6ec" stroke="#444" /><rect x="711" y="657" width="10" height="6.500" fill="#9dbde8" stroke="#456a9e" strokeWidth=".8" /><path d="M713.500 666v3h5v-3M712 669.500h8" stroke="#444" fill="none" />
        <rect x="739.500" y="654.500" width="15" height="15" fill="#f7f7f7" /><path d="M739.500 654v16M742.500 654v16M745.500 654v16M748.500 654v16M751.500 654v16M754.500 654v16M739 654.500h16M739 657.500h16M739 660.500h16M739 663.500h16M739 666.500h16M739 669.500h16" stroke="#6b6b70" strokeWidth=".9" />
        <g fill="#a9c4e6" stroke="#36567f" strokeWidth="1.300"><rect x="770.500" y="655.500" width="6" height="5" /><rect x="778.500" y="655.500" width="6" height="5" /><rect x="770.500" y="663" width="6" height="5" /><rect x="778.500" y="663" width="6" height="5" /></g>
        <g fill="#2b2b2b"><path d="M585 660h6l-3 4zM695.500 660h6l-3 4zM726 660h6l-3 4zM757 660h6l-3 4zM788 660h6l-3 4z" /></g>
      </svg>
    </div>
  );
}

function Timeline() {
  return (
    <div className="flex h-[50px] shrink-0 items-start border-t-2 border-[#c9c9c9] bg-[#f1f1f1] pr-[13px]">
      <svg width="200" height="48" viewBox="0 680 200 48">
        <g fill="#424242">
          <path d="M11 697h2v14h-2zM23 697.500v13L13 704zM45 697.500v13L35.500 704zM46 701h2v6h-2zM61 696l12 8l-12 8zM85 701h2v6h-2zM88 697.500v13l10-6.500zM111 697.500v13l10-6.500zM121 697h2v14h-2z" />
        </g>
        <path d="M154 714h2v7h-2z" fill="#c9c9c9" /><path d="M160 689h12v4l-4.500 5h-3L160 693z" fill="#666" /><path d="M165 695h2v26h-2z" fill="#666" />
        <g transform="translate(146.500 695.500) scale(.47)"><path d="M1 12Q1 8 4 5L7 2Q9 .5 12 .5H27Q31.500.5 31.500 5V21L27 29Q25 31.500 21 31.500H6Q.8 31.500.8 26Z" fill="#cfb0f5" stroke="#8a62cc" strokeWidth="2.500" /><rect x="5" y="12" width="17" height="16" rx="4" fill="#9a6be0" stroke="#7a50be" strokeWidth="1" /><path d="M13.500 11v18M4 19.500h19" stroke="#dcc4fa" strokeWidth="2" /><path d="M26 10l5-5v15l-5 7z" fill="#7a4fc0" /></g>
      </svg>
      <span className="mt-[16px] ml-auto"><Gear size={16} color="#8f8f8f" /></span>
    </div>
  );
}

export default function App() {
  return (
    <div className="flex h-[728px] w-[1360px] flex-col overflow-hidden bg-white font-['Liberation_Sans',Arial,sans-serif]">
      <TitleBar />
      <TabBar />
      <Ribbon />
      <Banner />
      <div className="relative h-[509px] shrink-0 overflow-hidden">
        <Scene />
        <div className="relative ml-1 flex h-full w-[300px] flex-col">
          <PanelHead title="BROWSER" arrows className="mt-[4px] h-[25px] shrink-0 border border-[#c9c9c9]" />
          <Browser />
          <div className="mt-auto mb-[4px] flex h-[250px] flex-col bg-[#e6e6e6]">
            <PanelHead title="COMMENTS" className="h-[25px] shrink-0 border-x border-b border-[#c9c9c9]" />
            <div className="h-[200px] border border-t-0 border-[#a9a9a9] bg-[#ddd] px-3 pt-[13px] text-center text-[11px] leading-[12px] tracking-[-0.150px] text-[#555]">Save this document to add comments, screenshots, and attachments.</div>
          </div>
        </div>
        <EditForm />
        <ValueBox />
        <div className="absolute top-[326px] left-[846px] flex h-[16px] w-[235px] items-center border border-[#777] bg-[#fafafa] pl-[2px] font-['Noto_Sans','Open_Sans',sans-serif] text-[11px] tracking-[-0.100px] whitespace-nowrap text-black">Select vertex, edge or face. Alt Key to extrude</div>
        <NavBar />
        <div className="absolute right-[16px] bottom-[9px] text-[11px] leading-[13px] font-bold tracking-[0.330px] text-[#333]">Multiple selections</div>
      </div>
      <Timeline />
    </div>
  );
}
